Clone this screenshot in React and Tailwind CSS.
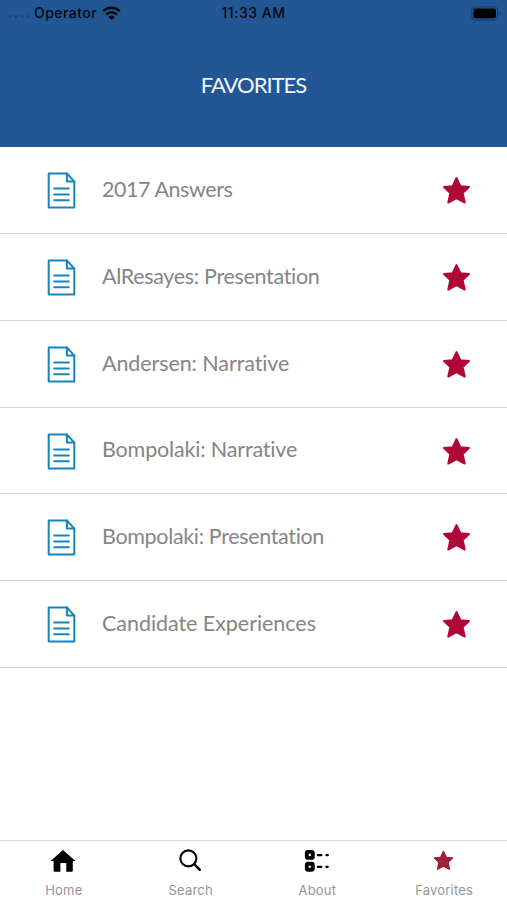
const favorites = [
  { title: '2017 Answers', tracking: 'tracking-[-0.44px]' },
  { title: 'AlResayes: Presentation', tracking: 'tracking-[-0.32px]' },
  { title: 'Andersen: Narrative', tracking: 'tracking-[-0.09px]' },
  { title: 'Bompolaki: Narrative', tracking: 'tracking-[-0.16px]' },
  { title: 'Bompolaki: Presentation', tracking: 'tracking-[-0.34px]' },
  { title: 'Candidate Experiences', tracking: 'tracking-[-0.05px]' },
]

const tabs = [
  { label: 'Home', Icon: HomeIcon },
  { label: 'Search', Icon: SearchIcon },
  { label: 'About', Icon: AboutIcon },
  { label: 'Favorites', Icon: FavoritesIcon },
]

function WifiIcon() {
  return (
    <svg className="w-[19px] h-[14px]" viewBox="0 0 19 14" fill="none" stroke="#03080f" strokeWidth="2.6">
      <path d="M1.2 5.2a11.8 11.8 0 0 1 16.6 0" />
      <path d="M4.1 8.5a7.7 7.7 0 0 1 10.8 0" />
      <path d="M9.5 13.8 6.3 10.9a4.5 4.5 0 0 1 6.4 0z" fill="#03080f" stroke="none" />
    </svg>
  )
}

function BatteryIcon() {
  return (
    <svg className="w-[31px] h-[15px]" viewBox="0 0 31 15">
      <rect x="0.7" y="0.9" width="26" height="13" rx="3.6" fill="none" stroke="#17406f" strokeWidth="1.1" />
      <rect x="2.4" y="2.6" width="22.6" height="9.6" rx="2" fill="#000" />
      <path d="M28.3 5.4c1.8.7 1.8 3.3 0 4z" fill="#17406f" />
    </svg>
  )
}

function DocumentIcon() {
  return (
    <svg
      className="w-[30px] h-[38px]"
      viewBox="0 0 30 38"
      fill="none"
      stroke="#1784bd"
      strokeWidth="2"
      strokeLinecap="round"
      strokeLinejoin="round"
    >
      <path d="M2.7 2.4h18.2l7.4 8.2v25.8H2.7z" />
      <path d="M20.9 2.4v8.2h7.4" />
      <path d="M8.2 17.6h14.6M8.2 23.4h14.6M8.2 29.2h14.6" />
    </svg>
  )
}

function StarIcon({ className }) {
  return (
    <svg className={className} viewBox="0 0 28 28" fill="currentColor" stroke="currentColor" strokeWidth="2" strokeLinejoin="round">
      <path d="M14 2 17.7 9.9 26 10.6 19.9 16.5 21.9 25.6 14 21.4 6.1 25.6 8.1 16.5 2 10.6 10.3 9.9z" />
    </svg>
  )
}

function HomeIcon() {
  return (
    <svg className="w-[26px] h-6" viewBox="0 0 26 24">
      <path d="M13 1 25.4 12h-2.6v9.8q0 1-1 1h-5.5v-8.8H10.4v8.8H4.6q-1 0-1-1V12h-3z" fill="#000" />
    </svg>
  )
}

function SearchIcon() {
  return (
    <svg className="w-6 h-6" viewBox="0 0 24 24" fill="none" stroke="#000" strokeWidth="2.1" strokeLinecap="round">
      <circle cx="10.4" cy="9.4" r="8" />
      <path d="m16.2 15.2 5.6 5.6" strokeWidth="2.4" />
    </svg>
  )
}

function AboutIcon() {
  return (
    <svg className="w-[26px] h-6" viewBox="0 0 26 24" fill="none" stroke="#000" strokeLinecap="round">
      <rect x="2.8" y="2.9" width="6" height="6" rx="1.2" strokeWidth="3.9" />
      <rect x="2.8" y="14.8" width="6" height="6" rx="1.2" strokeWidth="3.9" />
      <path d="M13.8 6.2h3.6M22.4 6.2h1.4M13.8 17.8h3.6M22.4 17.8h1.4" strokeWidth="2.2" />
    </svg>
  )
}

function FavoritesIcon() {
  return <StarIcon className="w-[21px] h-[21px] -mt-[2px] text-[#9d2039]" />
}

function StatusBar() {
  return (
    <div className="relative flex items-center justify-between h-[26px] pl-[8px] pr-[5px] font-['Inter'] text-[14px] leading-5 font-medium text-[#03080f]">
      <div className="flex items-center -mt-px">
        <div className="flex gap-[2px] w-[26px] pt-[7px]">
          {[0, 1, 2, 3].map(n => (
            <span key={n} className="w-[4px] h-[3px] rounded-full bg-[#1b4a80]" />
          ))}
        </div>
        <span className="w-[68px] tracking-[0.45px]">Operator</span>
        <WifiIcon />
      </div>
      <span className="absolute inset-x-0 top-[3px] text-center tracking-[0.5px]">11:33 AM</span>
      <BatteryIcon />
    </div>
  )
}

function App() {
  return (
    <div className="flex flex-col w-full h-screen bg-white overflow-hidden">
      <header className="h-[147.4px] shrink-0 bg-[#225694]">
        <StatusBar />
        <h1 className="pt-[43px] text-center font-['Lato'] text-[22px] leading-8 tracking-[-1px] text-[#f2f7fd]">
          FAVORITES
        </h1>
      </header>

      <ul className="flex-1">
        {favorites.map(item => (
          <li key={item.title} className="flex items-center h-[86.75px] pl-[46px] pr-[36px] border-b border-[#d6d6d6]">
            <DocumentIcon />
            <span className={`flex-1 pl-[26px] pb-[2px] whitespace-nowrap font-['Lato'] text-[21.5px] text-[#858585] ${item.tracking}`}>
              {item.title}
            </span>
            <StarIcon className="w-[29px] h-[29px] mt-px text-[#b00739]" />
          </li>
        ))}
      </ul>

      <nav className="grid grid-cols-4 h-[60px] shrink-0 border-t border-[#dedede]">
        {tabs.map(({ label, Icon }) => (
          <button key={label} className="flex flex-col items-center pt-[8px]">
            <span className="flex items-center justify-center h-6">
              <Icon />
            </span>
            <span className="mt-[8px] pl-px font-['Inter'] text-[13px] leading-[18px] tracking-[0.2px] text-[#949494]">{label}</span>
          </button>
        ))}
      </nav>
    </div>
  )
}

export default App
